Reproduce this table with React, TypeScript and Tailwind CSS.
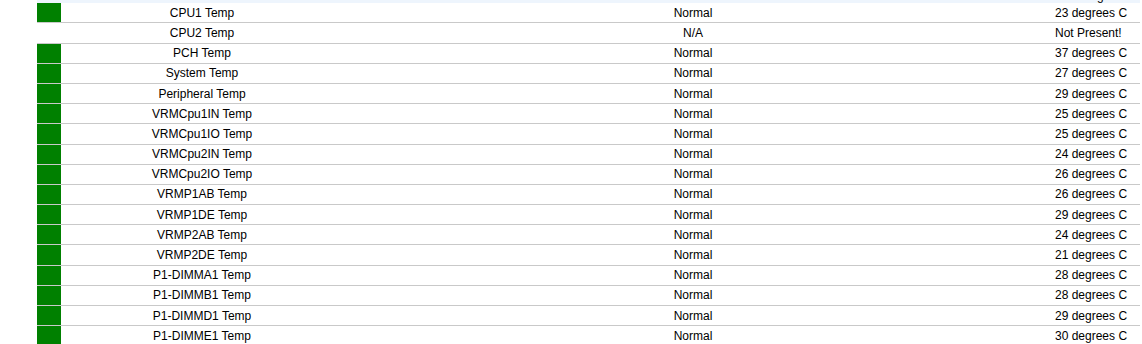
import React from "react";

type Row = { name: string; status: string; reading: string; present: boolean };

const rows: Row[] = [
  { name: "CPU1 Temp", status: "Normal", reading: "23 degrees C", present: true },
  { name: "CPU2 Temp", status: "N/A", reading: "Not Present!", present: false },
  { name: "PCH Temp", status: "Normal", reading: "37 degrees C", present: true },
  { name: "System Temp", status: "Normal", reading: "27 degrees C", present: true },
  { name: "Peripheral Temp", status: "Normal", reading: "29 degrees C", present: true },
  { name: "VRMCpu1IN Temp", status: "Normal", reading: "25 degrees C", present: true },
  { name: "VRMCpu1IO Temp", status: "Normal", reading: "25 degrees C", present: true },
  { name: "VRMCpu2IN Temp", status: "Normal", reading: "24 degrees C", present: true },
  { name: "VRMCpu2IO Temp", status: "Normal", reading: "26 degrees C", present: true },
  { name: "VRMP1AB Temp", status: "Normal", reading: "26 degrees C", present: true },
  { name: "VRMP1DE Temp", status: "Normal", reading: "29 degrees C", present: true },
  { name: "VRMP2AB Temp", status: "Normal", reading: "24 degrees C", present: true },
  { name: "VRMP2DE Temp", status: "Normal", reading: "21 degrees C", present: true },
  { name: "P1-DIMMA1 Temp", status: "Normal", reading: "28 degrees C", present: true },
  { name: "P1-DIMMB1 Temp", status: "Normal", reading: "28 degrees C", present: true },
  { name: "P1-DIMMD1 Temp", status: "Normal", reading: "29 degrees C", present: true },
  { name: "P1-DIMME1 Temp", status: "Normal", reading: "30 degrees C", present: true },
];

export default function App() {
  return (
    <div
      className="w-[1142px] h-[344px] overflow-hidden bg-white pl-[37px] text-[12px] text-black"
      style={{ fontFamily: '"Liberation Sans", Arial, sans-serif' }}
    >
      <div className="w-[1103px]">
        <div className="-mt-[17px] flex h-[20.2px] items-start bg-[#eef5fd] pt-[6px] leading-[14px]">
          <div className="w-[24px]" />
          <div className="w-[282px] text-center">Sensor</div>
          <div className="w-[700px] text-center">Status</div>
          <div className="flex-1 pl-[16px]">Reading</div>
        </div>
        {rows.map((r) => (
          <div
            key={r.name}
            className="flex h-[20.2px] items-stretch border-b border-[#c9c9c9] leading-[14px]"
          >
            <div className={r.present ? "w-[24px] bg-[#008000]" : "w-[24px]"} />
            <div className="flex w-[282px] items-center justify-center">{r.name}</div>
            <div className="flex w-[700px] items-center justify-center">{r.status}</div>
            <div className="flex flex-1 items-center pl-[12px]">{r.reading}</div>
          </div>
        ))}
      </div>
    </div>
  );
}
